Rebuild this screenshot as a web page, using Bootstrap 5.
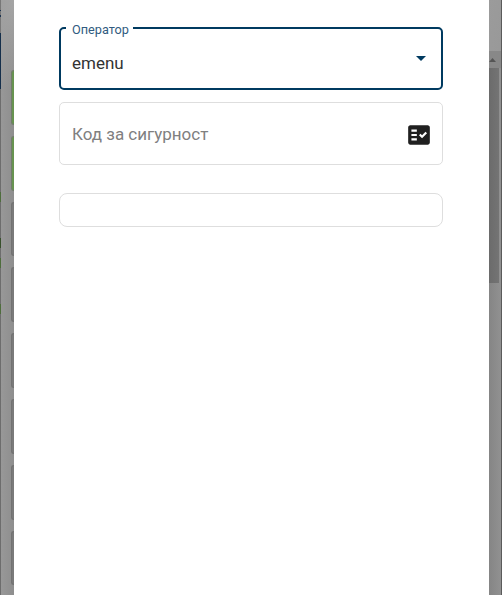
<!DOCTYPE html>
<html lang="bg">
<head>
<meta charset="utf-8">
<meta name="viewport" content="width=device-width, initial-scale=1">
<title>emenu</title>
<link href="https://cdn.jsdelivr.net/npm/bootstrap@5.3.0/dist/css/bootstrap.min.css" rel="stylesheet">
<style>
html, body { height: 100%; }
body { font-family: Roboto, "Noto Sans", sans-serif; color: #333; }
.page { height: 595px; background: #929292; }
.edge { width: 1px; background: linear-gradient(#777 0 10px, #1c3350 10px 11px, #777 11px 15px, #1c3350 15px 17px, #777 17px 33px, #152f4b 33px 89px, #6d6d6d 89px 192px, #4e6d3c 192px 202px, #6d6d6d 202px 238px, #38502c 238px 248px, #6d6d6d 248px 258px, #4e6d3c 258px 268px, #6d6d6d 268px 304px, #4e6d3c 304px 314px, #6d6d6d 314px); }
.backdrop-left { width: 13px; padding: 70px 0 0 10px; gap: 11px; background: radial-gradient(ellipse 40px 90px at 100% 0, #a5a5a5, rgba(165,165,165,0)), linear-gradient(90deg, #989898, #8e8e8e); }
.tile { height: 54.800px; border: 1px solid #727272; border-right: 0; border-radius: 4px 0 0 4px; background: #7a7a7a; }
.tile-on { background: #679350; border-color: #727d6b; }
.dialog { width: 475px; padding: 27px 46px 0 45px; }
.field { height: 63px; padding: 2px 10px 0 12px; border: 1px solid #dedede; border-radius: 5px; font-size: 17px; }
.field-active { padding: 10px 15px 0 11px; border: 2px solid #003a60; }
.field-label { left: 5px; top: -8px; padding: 0 4px 0 6px; font-size: 12.700px; line-height: 18px; color: #315b80; }
.field-code { margin-top: 12px; color: #808080; }
.panel { height: 34px; margin-top: 28px; border: 1px solid #dedede; border-radius: 8px; }
.backdrop-right { width: 12px; background: linear-gradient(100deg, #9b9b9b, #8f8f8f); }
.scroll-up { height: 17px; margin-top: 51px; background: #888; }
.scroll-track { background: linear-gradient(90deg, #858585, #919191); }
.scroll-thumb { width: 10px; height: 215px; background: linear-gradient(90deg, #6b6b6b, #747474); }
.edge-right { width: 1px; background: #5b5b5b; }
.arrow { margin-bottom: 10px; }
</style>
</head>
<body class="overflow-hidden">
<div class="page d-flex overflow-hidden">
  <div class="edge flex-shrink-0"></div>
  <div class="backdrop-left d-flex flex-column flex-shrink-0">
    <div class="tile tile-on flex-shrink-0"></div>
    <div class="tile tile-on flex-shrink-0"></div>
    <div class="tile flex-shrink-0"></div>
    <div class="tile flex-shrink-0"></div>
    <div class="tile flex-shrink-0"></div>
    <div class="tile flex-shrink-0"></div>
    <div class="tile flex-shrink-0"></div>
    <div class="tile flex-shrink-0"></div>
  </div>
  <main class="dialog bg-white flex-shrink-0">
    <div class="field field-active position-relative d-flex align-items-center justify-content-between" role="combobox" aria-label="Оператор" tabindex="0">
      <span class="field-label position-absolute bg-white">Оператор</span>
      <span>emenu</span>
      <svg class="arrow" width="10" height="5" viewBox="0 0 10 5" aria-hidden="true"><path d="M0 0h10L5 5z" fill="#003a60"/></svg>
    </div>
    <div class="field field-code d-flex align-items-center justify-content-between">
      <span>Код за сигурност</span>
      <svg width="26" height="26" viewBox="0 0 24 24" aria-hidden="true"><path fill="#202020" fill-rule="evenodd" d="M20 3H4c-1.100 0-2 .9-2 2v14c0 1.100.9 2 2 2h16c1.100 0 2-.9 2-2V5c0-1.100-.9-2-2-2zM10 17H5v-2h5v2zm0-4H5v-2h5v2zm0-4H5V7h5v2zm4.820 6L12 12.160l1.410-1.410 1.410 1.420L17.990 9l1.420 1.420L14.820 15z"/></svg>
    </div>
    <div class="panel"></div>
  </main>
  <div class="backdrop-right d-flex flex-column flex-shrink-0">
    <div class="scroll-up flex-shrink-0"><svg class="d-block" width="12" height="17" aria-hidden="true"><path d="M0 11l3.500-4L7 11z" fill="#555"/></svg></div>
    <div class="scroll-track flex-grow-1"><div class="scroll-thumb"></div></div>
  </div>
  <div class="edge-right flex-shrink-0"></div>
</div>
<script src="https://cdn.jsdelivr.net/npm/bootstrap@5.3.0/dist/js/bootstrap.bundle.min.js"></script>
</body>
</html>
